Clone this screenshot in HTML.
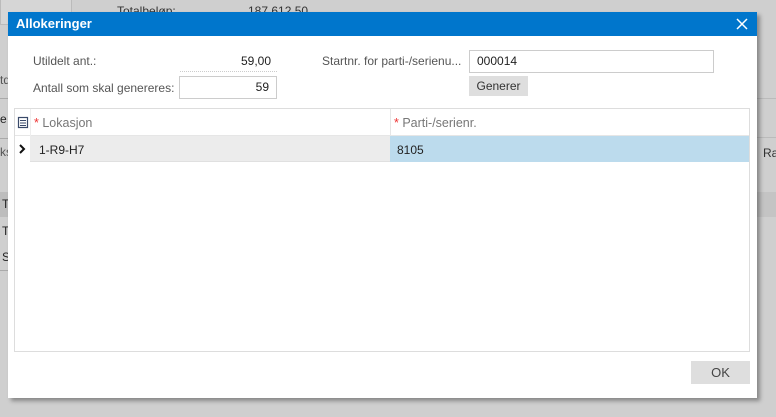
<!DOCTYPE html>
<html><head><meta charset="utf-8"><style>
*{box-sizing:border-box;margin:0;padding:0}
body{width:776px;height:417px;background:#cfcfcf;font-family:"Liberation Sans",sans-serif;font-size:12px;color:#333;position:relative;overflow:hidden}
.abs{position:absolute}
</style></head><body>
<div class="abs" style="left:0;top:0;width:72px;height:25px;border:1px solid #bbb;border-top:none;background:#d6d6d6"></div>
<div class="abs" style="left:117px;top:4px;color:#333">Totalbeløp:</div>
<div class="abs" style="left:248px;top:4px;color:#333">187 612,50</div>
<div class="abs" style="left:0;top:73px;color:#555">td</div>
<div class="abs" style="left:0;top:98px;width:8px;border-top:1px solid #aaa"></div>
<div class="abs" style="left:0;top:112px;color:#222">e</div>
<div class="abs" style="left:0;top:138px;width:8px;border-top:1px solid #aaa"></div>
<div class="abs" style="left:0;top:145px;color:#555">ks</div>
<div class="abs" style="left:0;top:192px;width:8px;height:25px;background:#bdbdbd"></div>
<div class="abs" style="left:2px;top:197px;color:#222">T</div>
<div class="abs" style="left:2px;top:224px;color:#222">T</div>
<div class="abs" style="left:2px;top:250px;color:#222">S</div>
<div class="abs" style="left:0;top:270px;width:8px;border-top:1px solid #aaa"></div>
<div class="abs" style="left:757px;top:98px;width:19px;border-top:1px solid #bbb"></div>
<div class="abs" style="left:757px;top:137px;width:19px;border-top:1px solid #bbb"></div>
<div class="abs" style="left:763px;top:146px;color:#333">Ra</div>
<div class="abs" style="left:757px;top:192px;width:19px;height:25px;background:#c4c4c4"></div>
<div class="abs" style="left:8px;top:12px;width:749px;height:386px;background:#fff;box-shadow:3px 3px 4px rgba(0,0,0,.35)">
  <div style="height:24px;background:#0076cc;color:#fff;font-weight:bold;font-size:13px;line-height:24px;padding-left:8px">Allokeringer</div>
  <svg class="abs" style="left:728px;top:6px" width="12" height="12" viewBox="0 0 12 12"><path d="M1 1L11 11M11 1L1 11" stroke="#fff" stroke-width="1.5"/></svg>
  <div class="abs" style="left:25px;top:42px;color:#555">Utildelt ant.:</div>
  <div class="abs" style="left:233px;top:42px;color:#222">59,00</div>
  <div class="abs" style="left:172px;top:59px;width:97px;border-top:1px dotted #ccc"></div>
  <div class="abs" style="left:25px;top:69px;color:#555">Antall som skal genereres:</div>
  <div class="abs" style="left:171px;top:64px;width:98px;height:23px;border:1px solid #ccc;text-align:right;padding-right:7px;line-height:21px;color:#222">59</div>
  <div class="abs" style="left:314px;top:42px;color:#555">Startnr. for parti-/serienu...</div>
  <div class="abs" style="left:461px;top:38px;width:245px;height:23px;border:1px solid #ccc;padding-left:7px;line-height:21px;color:#222">000014</div>
  <div class="abs" style="left:461px;top:64px;width:59px;height:20px;background:#dedede;text-align:center;line-height:20px;color:#333">Generer</div>
  <div class="abs" style="left:6px;top:96px;width:736px;height:244px;border:1px solid #ddd">
    <div class="abs" style="left:0;top:0;width:734px;height:27px;border-bottom:1px solid #e6e6e6"></div>
    <svg class="abs" style="left:2px;top:7px" width="12" height="13" viewBox="0 0 12 13"><rect x="1.5" y="1.5" width="9" height="10" fill="none" stroke="#3a4a6a" stroke-width="1.2"/><path d="M3 4.5H9M3 7H9M3 9.5H9" stroke="#3a4a6a" stroke-width="1"/></svg>
    <div class="abs" style="left:15px;top:0;width:1px;height:52px;background:#eee"></div>
    <div class="abs" style="left:19px;top:7px;color:#777;font-size:12.5px"><span style="color:#e33">*</span> Lokasjon</div>
    <div class="abs" style="left:375px;top:0;width:1px;height:27px;background:#e6e6e6"></div>
    <div class="abs" style="left:379px;top:7px;color:#777;font-size:12.5px"><span style="color:#e33">*</span> Parti-/serienr.</div>
    <div class="abs" style="left:15px;top:27px;width:360px;height:26px;background:#ececec;border-bottom:1px solid #e0e0e0"></div>
    <div class="abs" style="left:375px;top:27px;width:359px;height:26px;background:#bcdbed"></div>
    <svg class="abs" style="left:3px;top:35px" width="8" height="10" viewBox="0 0 8 10"><path d="M2 1L6 5L2 9" fill="none" stroke="#111" stroke-width="2"/></svg>
    <div class="abs" style="left:24px;top:34px;color:#222">1-R9-H7</div>
    <div class="abs" style="left:382px;top:34px;color:#222">8105</div>
  </div>
  <div class="abs" style="left:683px;top:349px;width:59px;height:23px;background:#dedede;text-align:center;line-height:23px;color:#444;font-size:13px">OK</div>
</div>
</body></html>
